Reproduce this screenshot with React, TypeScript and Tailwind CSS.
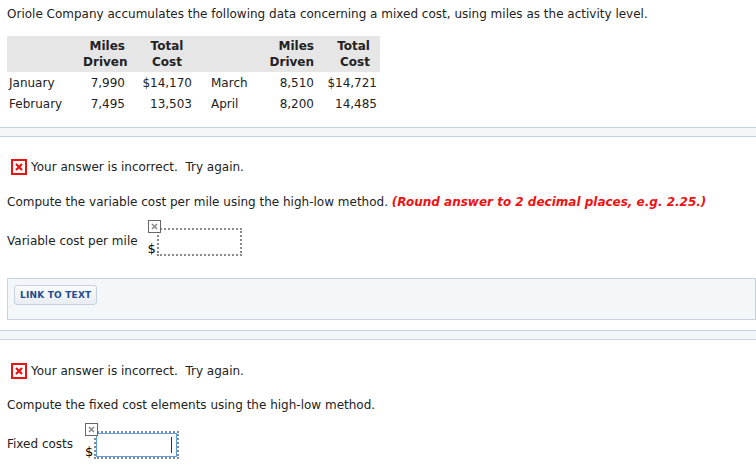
import React from 'react';

const font = { fontFamily: '"DejaVu Sans", Verdana, sans-serif' };

function WrongMark() {
  return (
    <span className="inline-flex h-[16px] w-[16px] items-center justify-center border-2 border-[#ee1111] bg-white">
      <svg width="8" height="8" viewBox="0 0 8 8">
        <path d="M1 1 L7 7 M7 1 L1 7" stroke="#ee1111" strokeWidth="2.2" />
      </svg>
    </span>
  );
}

function SmallX() {
  return (
    <span className="flex h-[13px] w-[13px] items-center justify-center border border-[#666] bg-white">
      <svg width="7" height="7" viewBox="0 0 7 7">
        <path d="M1 1 L6 6 M6 1 L1 6" stroke="#888" strokeWidth="1.5" />
      </svg>
    </span>
  );
}

function AnswerBox({ focused }: { focused?: boolean }) {
  return (
    <div className="relative h-[36px] w-[94px] shrink-0">
      <div className="absolute left-0 top-0 z-10">
        <SmallX />
      </div>
      <span className="absolute left-0 top-[21px] text-[13px] leading-[16px] text-black">$</span>
      <div className="absolute left-[9px] top-[8px] h-[28px] w-[85px] border-2 border-dotted border-[#8a8a8a] bg-white">
        {focused && (
          <div className="relative h-full w-full border border-[#5a9fe0]">
            <div className="absolute right-[4px] top-[3px] h-[16px] w-px bg-[#333]" />
          </div>
        )}
      </div>
    </div>
  );
}

function Separator() {
  return <div className="h-[10px] border-y border-[#c8d2de] bg-[#f4f7fa]" />;
}

const rows = [
  ['January', '7,990', '$14,170', 'March', '8,510', '$14,721'],
  ['February', '7,495', '13,503', 'April', '8,200', '14,485'],
];

export default function App() {
  return (
    <div className="h-[466px] w-[756px] overflow-hidden bg-white text-[12px] leading-[16px] text-[#222]" style={font}>
      <p className="px-[7px] pt-[6px]">
        Oriole Company accumulates the following data concerning a mixed cost, using miles as the activity level.
      </p>

      <table className="ml-[7px] mt-[14px] w-[373px] table-fixed border-collapse">
        <colgroup>
          <col className="w-[76px]" />
          <col className="w-[45px]" />
          <col className="w-[72px]" />
          <col className="w-[59px]" />
          <col className="w-[58px]" />
          <col className="w-[63px]" />
        </colgroup>
        <thead>
          <tr className="bg-[#e6e6e6]">
            <th className="h-[36px]" />
            <th className="pr-[3px] text-right font-bold">Miles<br />Driven</th>
            <th className="pl-[6px] text-center font-bold">Total<br />Cost</th>
            <th />
            <th className="pr-[3px] text-right font-bold">Miles<br />Driven</th>
            <th className="pr-[10px] text-right font-bold">Total<br />Cost</th>
          </tr>
        </thead>
        <tbody>
          {rows.map((r) => (
            <tr key={r[0]} className="h-[21px]">
              <td className="pl-[2px] pt-[1px]">{r[0]}</td>
              <td className="pr-[3px] pt-[1px] text-right">{r[1]}</td>
              <td className="pr-[8px] pt-[1px] text-right">{r[2]}</td>
              <td className="pl-[11px] pt-[1px]">{r[3]}</td>
              <td className="pr-[3px] pt-[1px] text-right">{r[4]}</td>
              <td className="pr-[3px] pt-[1px] text-right">{r[5]}</td>
            </tr>
          ))}
        </tbody>
      </table>

      <div className="mt-[13px]">
        <Separator />
      </div>

      <div className="ml-[11px] mt-[22px] flex h-[16px] items-center gap-[4px]">
        <WrongMark />
        <span>Your answer is incorrect.&nbsp; Try again.</span>
      </div>

      <p className="mt-[19px] px-[7px]">
        Compute the variable cost per mile using the high-low method.{' '}
        <span className="font-bold italic text-[#ee1111]">(Round answer to 2 decimal places, e.g. 2.25.)</span>
      </p>

      <div className="mt-[10px] flex items-end pl-[7px]">
        <span className="mb-[7px] mr-[10px]">Variable cost per mile</span>
        <AnswerBox />
      </div>

      <div className="ml-[7px] mt-[22px] h-[42px] border border-[#c8d2de] bg-[#f4f7fa] pl-[6px] pt-[6px]">
        <button className="h-[20px] rounded-[3px] border border-[#c8d0da] bg-gradient-to-b from-[#fafbfd] to-[#e9eef4] px-[5px] text-[9px] font-bold leading-none tracking-[0.2px] text-[#1f4a8f]">
          LINK TO TEXT
        </button>
      </div>

      <div className="mt-[10px]">
        <Separator />
      </div>

      <div className="ml-[11px] mt-[23px] flex h-[16px] items-center gap-[4px]">
        <WrongMark />
        <span>Your answer is incorrect.&nbsp; Try again.</span>
      </div>

      <p className="mt-[18px] px-[7px]">Compute the fixed cost elements using the high-low method.</p>

      <div className="mt-[10px] flex items-end pl-[7px]">
        <span className="mb-[7px] mr-[12px]">Fixed costs</span>
        <AnswerBox focused />
      </div>
    </div>
  );
}
